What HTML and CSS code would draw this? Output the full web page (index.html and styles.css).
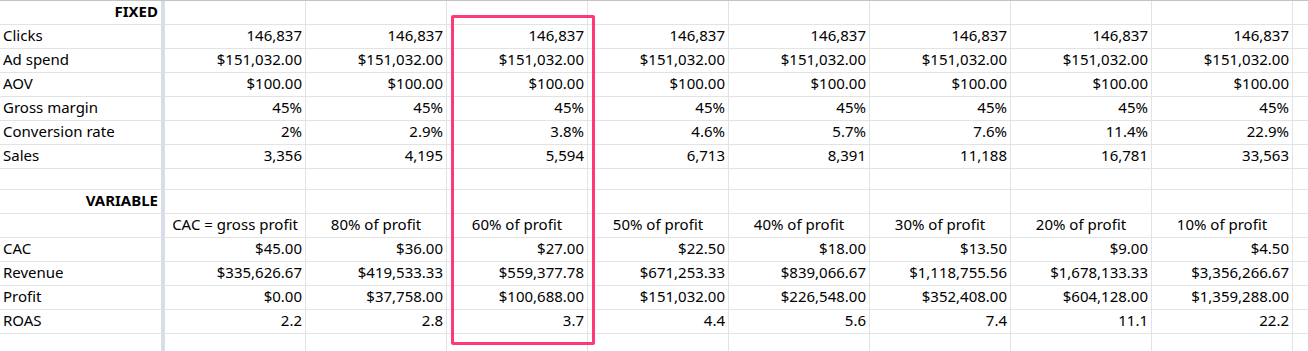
FILE: index.html
```html
<!DOCTYPE html>
<html>
<head>
<meta charset="utf-8">
<link rel="stylesheet" href="styles.css">
</head>
<body>
<div class="wrap">
  <div class="sheet">
    <div class="c a b">FIXED</div><div class="c"></div><div class="c"></div><div class="c"></div><div class="c"></div><div class="c"></div><div class="c"></div><div class="c"></div><div class="c"></div><div class="c e"></div>

    <div class="c a">Clicks</div><div class="c">146,837</div><div class="c">146,837</div><div class="c">146,837</div><div class="c">146,837</div><div class="c">146,837</div><div class="c">146,837</div><div class="c">146,837</div><div class="c">146,837</div><div class="c e"></div>

    <div class="c a">Ad spend</div><div class="c">$151,032.00</div><div class="c">$151,032.00</div><div class="c">$151,032.00</div><div class="c">$151,032.00</div><div class="c">$151,032.00</div><div class="c">$151,032.00</div><div class="c">$151,032.00</div><div class="c">$151,032.00</div><div class="c e"></div>

    <div class="c a">AOV</div><div class="c">$100.00</div><div class="c">$100.00</div><div class="c">$100.00</div><div class="c">$100.00</div><div class="c">$100.00</div><div class="c">$100.00</div><div class="c">$100.00</div><div class="c">$100.00</div><div class="c e"></div>

    <div class="c a">Gross margin</div><div class="c">45%</div><div class="c">45%</div><div class="c">45%</div><div class="c">45%</div><div class="c">45%</div><div class="c">45%</div><div class="c">45%</div><div class="c">45%</div><div class="c e"></div>

    <div class="c a">Conversion rate</div><div class="c">2%</div><div class="c">2.9%</div><div class="c">3.8%</div><div class="c">4.6%</div><div class="c">5.7%</div><div class="c">7.6%</div><div class="c">11.4%</div><div class="c">22.9%</div><div class="c e"></div>

    <div class="c a">Sales</div><div class="c">3,356</div><div class="c">4,195</div><div class="c">5,594</div><div class="c">6,713</div><div class="c">8,391</div><div class="c">11,188</div><div class="c">16,781</div><div class="c">33,563</div><div class="c e"></div>

    <div class="c a"></div><div class="c"></div><div class="c"></div><div class="c"></div><div class="c"></div><div class="c"></div><div class="c"></div><div class="c"></div><div class="c"></div><div class="c e"></div>

    <div class="c a b">VARIABLE</div><div class="c"></div><div class="c"></div><div class="c"></div><div class="c"></div><div class="c"></div><div class="c"></div><div class="c"></div><div class="c"></div><div class="c e"></div>

    <div class="c a"></div><div class="c h">CAC = gross profit</div><div class="c h">80% of profit</div><div class="c h">60% of profit</div><div class="c h">50% of profit</div><div class="c h">40% of profit</div><div class="c h">30% of profit</div><div class="c h">20% of profit</div><div class="c h">10% of profit</div><div class="c e"></div>

    <div class="c a">CAC</div><div class="c">$45.00</div><div class="c">$36.00</div><div class="c">$27.00</div><div class="c">$22.50</div><div class="c">$18.00</div><div class="c">$13.50</div><div class="c">$9.00</div><div class="c">$4.50</div><div class="c e"></div>

    <div class="c a">Revenue</div><div class="c">$335,626.67</div><div class="c">$419,533.33</div><div class="c">$559,377.78</div><div class="c">$671,253.33</div><div class="c">$839,066.67</div><div class="c">$1,118,755.56</div><div class="c">$1,678,133.33</div><div class="c">$3,356,266.67</div><div class="c e"></div>

    <div class="c a">Profit</div><div class="c">$0.00</div><div class="c">$37,758.00</div><div class="c">$100,688.00</div><div class="c">$151,032.00</div><div class="c">$226,548.00</div><div class="c">$352,408.00</div><div class="c">$604,128.00</div><div class="c">$1,359,288.00</div><div class="c e"></div>

    <div class="c a">ROAS</div><div class="c">2.2</div><div class="c">2.8</div><div class="c">3.7</div><div class="c">4.4</div><div class="c">5.6</div><div class="c">7.4</div><div class="c">11.1</div><div class="c">22.2</div><div class="c e"></div>

    <div class="c a"></div><div class="c"></div><div class="c"></div><div class="c"></div><div class="c"></div><div class="c"></div><div class="c"></div><div class="c"></div><div class="c"></div><div class="c e"></div>
  </div>
  <div class="highlight"></div>
</div>
</body>
</html>
```

FILE: styles.css
```css
html, body {
  margin: 0;
  padding: 0;
  background: #ffffff;
  overflow: hidden;
}

.wrap {
  position: relative;
  width: 1308px;
  height: 351px;
  overflow: hidden;
}

.sheet {
  display: grid;
  grid-template-columns: 165px repeat(8, 141px) 15px;
  grid-template-rows: repeat(7, 24px) 21px repeat(6, 24px) 24px;
  border-top: 1px solid #c3c3c3;
  font-family: "Noto Sans", "Open Sans", sans-serif;
  font-size: 15px;
  color: #000000;
}

.c {
  box-sizing: border-box;
  border-right: 1px solid #e2e3e3;
  border-bottom: 1px solid #e2e3e3;
  line-height: 21px;
  padding: 0 3px 0 3px;
  text-align: right;
  white-space: nowrap;
  overflow: hidden;
}

.a {
  text-align: left;
  border-right: 4px solid #d9dde7;
}

.b {
  font-weight: 700;
  text-align: right;
}

.h {
  text-align: center;
  padding: 0;
}

.e {
  border-right: none;
}

.highlight {
  position: absolute;
  left: 451px;
  top: 15px;
  width: 144px;
  height: 330px;
  box-sizing: border-box;
  border: 3px solid #fd3a76;
  border-radius: 2px;
}
```
